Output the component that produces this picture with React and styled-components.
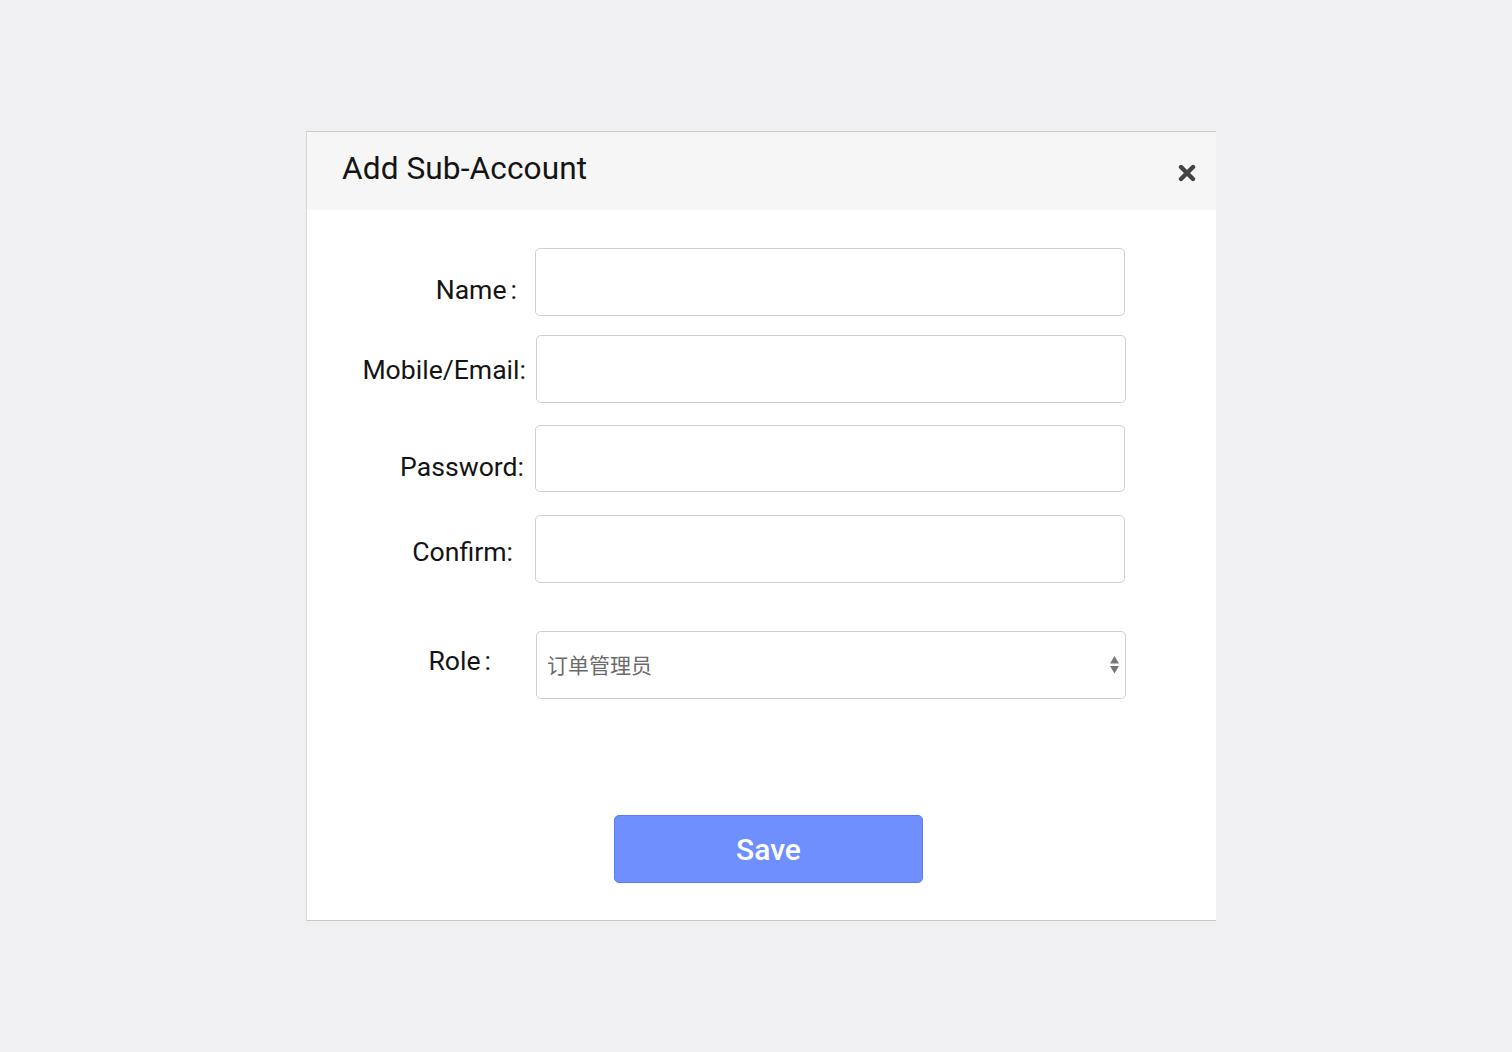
import React from "react";
import styled, { createGlobalStyle } from "styled-components";

const Global = createGlobalStyle`
  html, body { margin: 0; padding: 0; background: #f0f0f2; }
  body { font-family: Roboto, "Noto Sans", "Noto Sans CJK SC", sans-serif; }
  * { box-sizing: border-box; }
`;

const Page = styled.div`
  min-height: 1052px;
  padding: 131px 0 0 306px;
`;

const Dialog = styled.div`
  width: 910px;
  background: #ffffff;
  border-top: 1px solid #c9c9c9;
  border-left: 1px solid #d6d6d6;
  border-bottom: 1px solid #c9c9c9;
`;

const Header = styled.div`
  height: 78px;
  background: #f6f6f6;
  display: flex;
  align-items: center;
  justify-content: space-between;
  padding: 0 20px 0 35px;
`;

const Title = styled.h2`
  margin: 0 0 6px 0;
  font-family: Roboto, sans-serif;
  font-weight: 400;
  font-size: 31.6px;
  color: #141414;
  letter-spacing: 0.1px;
`;

const CloseButton = styled.button`
  border: none;
  background: transparent;
  padding: 0;
  margin-top: 4px;
  width: 18px;
  height: 18px;
  display: flex;
  cursor: pointer;
`;

const Body = styled.div`
  padding: 38px 0 37px 0;
  display: flex;
  flex-direction: column;
`;

const Row = styled.div`
  display: flex;
  align-items: flex-start;
  margin-top: ${(p) => p.$gap || 0}px;
`;

const Label = styled.label`
  width: ${(p) => 228 + (p.$shift || 0)}px;
  flex: none;
  text-align: right;
  padding-right: ${(p) => p.$pr}px;
  padding-top: ${(p) => p.$pt}px;
  font-family: Roboto, sans-serif;
  font-size: 26.6px;
  line-height: 30px;
  color: #141414;
`;

const Colon = styled.span`
  margin-left: 4px;
`;

const Input = styled.input`
  width: 590px;
  height: ${(p) => p.$h || 68}px;
  border: 1px solid #cfcfcf;
  border-radius: 5px;
  background: #fff;
  font-size: 22px;
  padding: 0 10px;
  outline: none;
`;

const SelectBox = styled.div`
  width: 590px;
  height: 68px;
  border: 1px solid #cfcfcf;
  border-radius: 5px;
  background: #fff;
  display: flex;
  align-items: center;
  justify-content: space-between;
  padding: 0 5px 0 10px;
`;

const SelectText = styled.span`
  font-family: "Noto Sans CJK SC", sans-serif;
  font-size: 21px;
  color: #6b6b6b;
  margin-top: -2px;
`;

const Footer = styled.div`
  display: flex;
  justify-content: flex-start;
  padding-left: 307px;
  margin-top: 116px;
`;

const SaveButton = styled.button`
  width: 309px;
  height: 68px;
  background: #6f8fff;
  border: 1px solid #5a7cf2;
  border-radius: 5px;
  color: #ffffff;
  font-family: Roboto, sans-serif;
  font-weight: 500;
  font-size: 30px;
  cursor: pointer;
  padding: 0;
`;

const CloseIcon = () => (
  <svg width="18" height="18" viewBox="0 0 18 18">
    <path d="M3 3 L15 15 M15 3 L3 15" stroke="#444" strokeWidth="4.4" strokeLinecap="round" />
  </svg>
);

const SortArrows = () => (
  <svg width="11" height="20" viewBox="0 0 11 20">
    <path d="M5.5 1 L10 8.5 L1 8.5 Z" fill="#777" />
    <path d="M1 11 L10 11 L5.5 18.5 Z" fill="#777" />
  </svg>
);

export default function App() {
  return (
    <>
      <Global />
      <Page>
        <Dialog>
          <Header>
            <Title>Add Sub-Account</Title>
            <CloseButton aria-label="close">
              <CloseIcon />
            </CloseButton>
          </Header>
          <Body>
            <Row>
              <Label $pr={18} $pt={27}>
                Name<Colon>:</Colon>
              </Label>
              <Input type="text" />
            </Row>
            <Row $gap={19}>
              <Label $pr={10} $pt={20} $shift={1}>
                Mobile/Email:
              </Label>
              <Input type="text" />
            </Row>
            <Row $gap={22}>
              <Label $pr={11} $pt={27}>
                Password:
              </Label>
              <Input type="password" $h={67} />
            </Row>
            <Row $gap={23}>
              <Label $pr={22} $pt={22}>
                Confirm:
              </Label>
              <Input type="password" />
            </Row>
            <Row $gap={48}>
              <Label $pr={45} $pt={15} $shift={1}>
                Role<Colon>:</Colon>
              </Label>
              <SelectBox>
                <SelectText>订单管理员</SelectText>
                <SortArrows />
              </SelectBox>
            </Row>
            <Footer>
              <SaveButton>Save</SaveButton>
            </Footer>
          </Body>
        </Dialog>
      </Page>
    </>
  );
}
